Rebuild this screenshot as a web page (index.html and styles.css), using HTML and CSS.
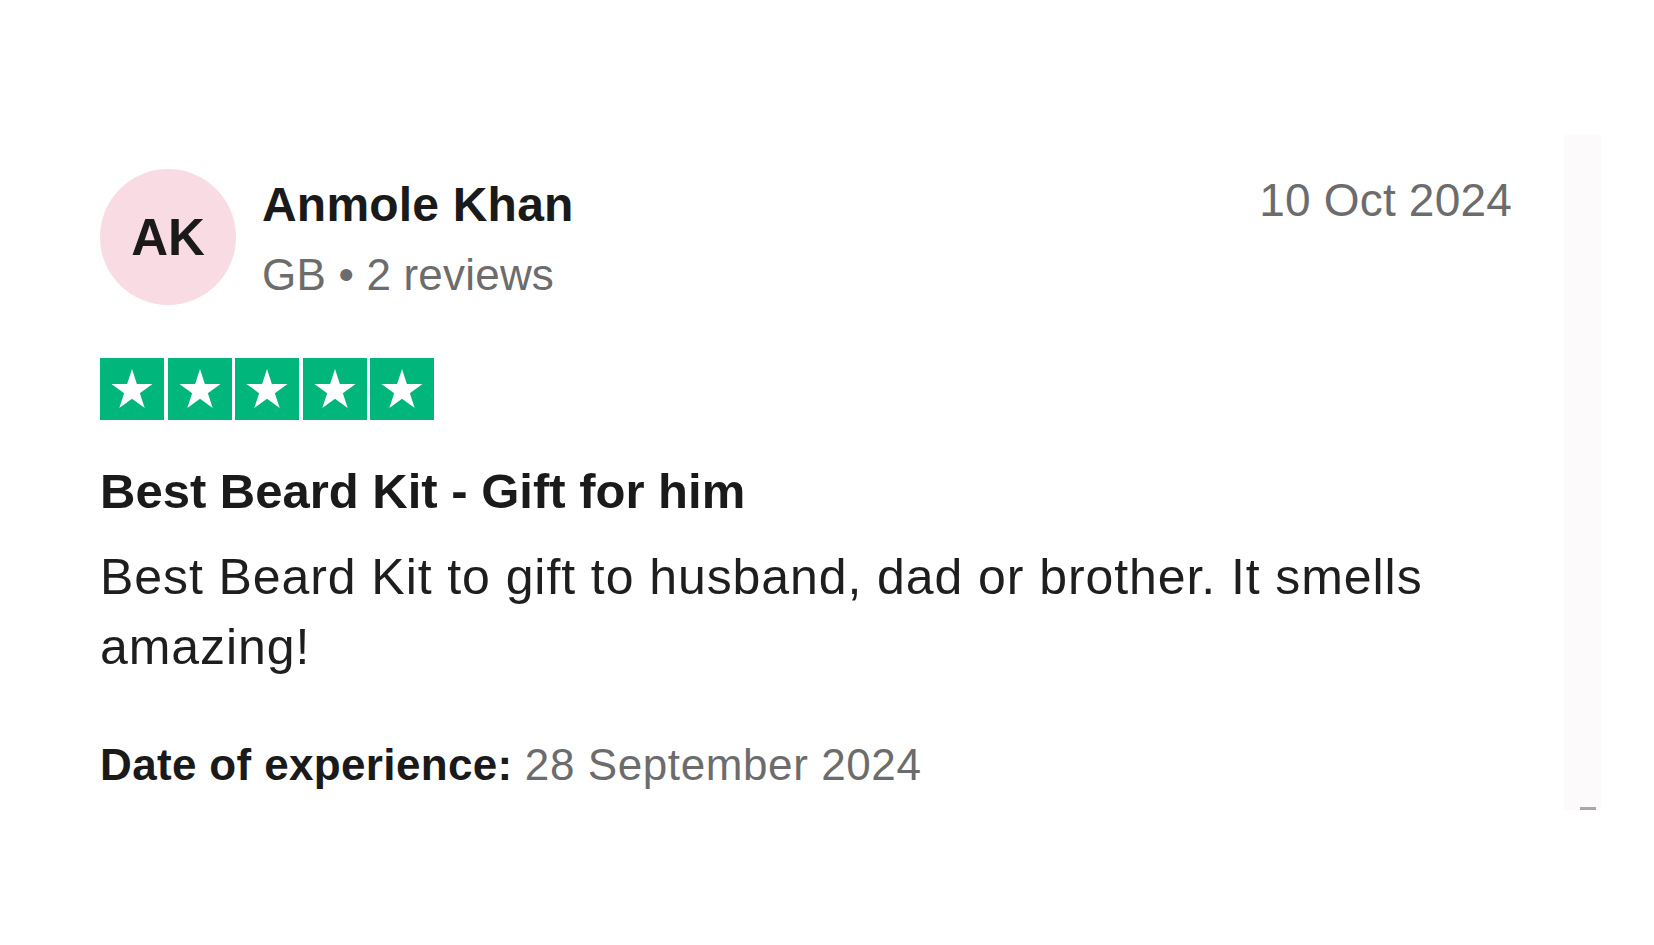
FILE: index.html
```html
<!DOCTYPE html>
<html lang="en">
<head>
<meta charset="utf-8">
<title>Review</title>
<link rel="stylesheet" href="styles.css">
</head>
<body>
<div class="page">
  <article class="card">
    <header class="head">
      <div class="avatar">AK</div>
      <div class="who">
        <div class="name">Anmole Khan</div>
        <div class="meta">GB • 2 reviews</div>
      </div>
      <div class="date">10 Oct 2024</div>
    </header>
    <div class="stars">
      <span class="star"><svg viewBox="0 0 64 62" width="64" height="62"><polygon fill="#fff" points="32,11 36.85,25.93 52.54,25.93 39.85,35.15 44.7,50.07 32,40.85 19.3,50.07 24.15,35.15 11.46,25.93 27.15,25.93"/></svg></span>
      <span class="star"><svg viewBox="0 0 64 62" width="64" height="62"><polygon fill="#fff" points="32,11 36.85,25.93 52.54,25.93 39.85,35.15 44.7,50.07 32,40.85 19.3,50.07 24.15,35.15 11.46,25.93 27.15,25.93"/></svg></span>
      <span class="star"><svg viewBox="0 0 64 62" width="64" height="62"><polygon fill="#fff" points="32,11 36.85,25.93 52.54,25.93 39.85,35.15 44.7,50.07 32,40.85 19.3,50.07 24.15,35.15 11.46,25.93 27.15,25.93"/></svg></span>
      <span class="star"><svg viewBox="0 0 64 62" width="64" height="62"><polygon fill="#fff" points="32,11 36.85,25.93 52.54,25.93 39.85,35.15 44.7,50.07 32,40.85 19.3,50.07 24.15,35.15 11.46,25.93 27.15,25.93"/></svg></span>
      <span class="star"><svg viewBox="0 0 64 62" width="64" height="62"><polygon fill="#fff" points="32,11 36.85,25.93 52.54,25.93 39.85,35.15 44.7,50.07 32,40.85 19.3,50.07 24.15,35.15 11.46,25.93 27.15,25.93"/></svg></span>
    </div>
    <h2 class="title">Best Beard Kit - Gift for him</h2>
    <p class="text">Best Beard Kit to gift to husband, dad or brother. It smells amazing!</p>
    <p class="exp"><b class="exp-label">Date of experience:</b> <span class="exp-date">28 September 2024</span></p>
  </article>
  <div class="rail"><span class="rail-mark"></span></div>
</div>
</body>
</html>
```
FILE: styles.css
```css
html, body {
  margin: 0;
  padding: 0;
  background: #ffffff;
}
body {
  font-family: "Liberation Sans", Arial, sans-serif;
  color: #1c1c1c;
}
.page {
  display: flex;
  align-items: flex-start;
  padding: 135px 0 0 100px;
}
.card {
  width: 1412px;
  padding-top: 34px;
}
.head {
  display: flex;
  align-items: flex-start;
}
.avatar {
  width: 136px;
  height: 136px;
  border-radius: 50%;
  background: #f9dce3;
  display: flex;
  align-items: center;
  justify-content: center;
  font-weight: 700;
  font-size: 51px;
  color: #1a1a1a;
  flex-shrink: 0;
}
.who {
  margin-left: 26px;
  padding-top: 8px;
}
.name {
  font-size: 48px;
  line-height: 56px;
  font-weight: 700;
  letter-spacing: 0.2px;
  color: #1a1a1a;
}
.meta {
  margin-top: 17px;
  font-size: 44px;
  line-height: 50px;
  letter-spacing: 0.2px;
  color: #6c6c6c;
}
.date {
  margin-left: auto;
  margin-top: 5px;
  font-size: 46px;
  line-height: 52px;
  letter-spacing: 0.2px;
  color: #6c6c6c;
}
.stars {
  display: flex;
  gap: 3.5px;
  margin-top: 53px;
}
.star {
  display: block;
  width: 64px;
  height: 62px;
  background: #00b67a;
}
.star svg {
  display: block;
}
.title {
  margin: 43px 0 0;
  font-size: 49px;
  line-height: 56px;
  font-weight: 700;
  color: #1a1a1a;
}
.text {
  margin: 23px 0 0;
  font-size: 50px;
  line-height: 70px;
  letter-spacing: 0.92px;
  color: #1e1e1e;
}
.exp {
  margin: 58px 0 0;
  font-size: 44px;
  line-height: 50px;
}
.exp-label {
  font-weight: 700;
  color: #1a1a1a;
  letter-spacing: 0.35px;
}
.exp-date {
  color: #6c6c6c;
  letter-spacing: 0.6px;
}
.rail {
  width: 37px;
  height: 675px;
  margin-left: 52px;
  background: #fcfafa;
  display: flex;
  flex-direction: column;
  justify-content: flex-end;
  align-items: center;
}
.rail-mark {
  display: block;
  width: 16px;
  height: 3px;
  margin-left: 10px;
  background: #a8a8a8;
}
```
